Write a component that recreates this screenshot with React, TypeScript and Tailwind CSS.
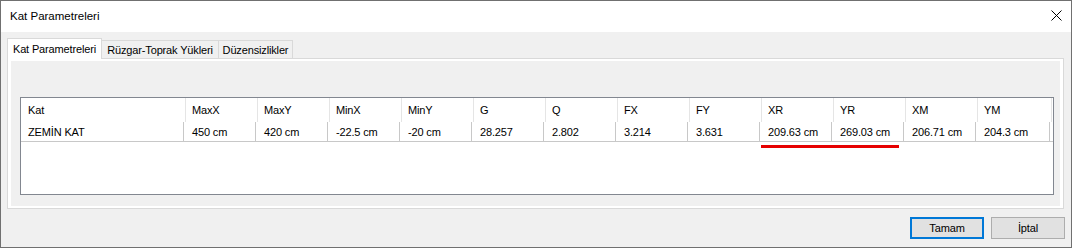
import React from 'react';

const columns = [
  { name: 'Kat', value: 'ZEMİN KAT' },
  { name: 'MaxX', value: '450 cm' },
  { name: 'MaxY', value: '420 cm' },
  { name: 'MinX', value: '-22.5 cm' },
  { name: 'MinY', value: '-20 cm' },
  { name: 'G', value: '28.257' },
  { name: 'Q', value: '2.802' },
  { name: 'FX', value: '3.214' },
  { name: 'FY', value: '3.631' },
  { name: 'XR', value: '209.63 cm' },
  { name: 'YR', value: '269.03 cm' },
  { name: 'XM', value: '206.71 cm' },
  { name: 'YM', value: '204.3 cm' },
];

const headerWidth = (i: number) => (i === 0 ? 'w-[165px] pl-[7px]' : i === 12 ? 'w-[74px] pl-[6px]' : 'w-[72px] pl-[6px]');
const cellWidth = (i: number) => (i === 0 ? 'w-[163px] pl-[7px]' : i === 12 ? 'w-[74px] pl-[8px]' : 'w-[72px] pl-[8px]');

const App = () => {
  return (
    <div className="w-[1072px] h-[248px] border border-[#707070] bg-[#f0f0f0] flex flex-col font-['Liberation_Sans',Arial,sans-serif] text-black">
      {/* title bar */}
      <div className="h-[31px] bg-white flex items-center justify-between pl-[9px] pr-[9px]">
        <span className="text-[11.5px]">Kat Parametreleri</span>
        <svg width="11" height="11" viewBox="0 0 11 11" className="-mt-[2px]">
          <path d="M0.5 0.5 L10.5 10.5 M10.5 0.5 L0.5 10.5" stroke="#000" strokeWidth="1" fill="none" />
        </svg>
      </div>

      <div className="px-[6px] pt-[6px] text-[11px] tracking-[-0.15px]">
        {/* tabs */}
        <div className="flex items-end h-[20px]">
          <div className="relative z-10 -mb-px h-[21px] w-[95px] bg-white border border-b-0 border-[#d9d9d9] flex items-center justify-center">
            Kat Parametreleri
          </div>
          <div className="h-[18px] w-[117px] border border-b-0 border-l-0 border-[#d9d9d9] flex items-center justify-center pt-[1px]">
            Rüzgar-Toprak Yükleri
          </div>
          <div className="h-[18px] w-[74px] border border-b-0 border-l-0 border-[#d9d9d9] flex items-center justify-center pt-[1px]">
            Düzensizlikler
          </div>
        </div>

        {/* tab page */}
        <div className="w-[1057px] h-[151px] border border-[#d9d9d9] bg-white pt-[2px] pb-[2px] px-[3px]">
          <div className="h-full bg-[#f0f0f0] pl-[9px] pt-[36px]">
            <div className="relative w-[1034px] h-[98px] border border-[#828790] bg-white">
              <div className="flex h-[24px]">
                {columns.map((c, i) => (
                  <div key={c.name} className={`${headerWidth(i)} h-full flex items-center border-r border-[#e5e5e5]`}>
                    {c.name}
                  </div>
                ))}
              </div>
              <div className="flex h-[20px] border-b border-[#c8c8c8]">
                {columns.map((c, i) => (
                  <div key={c.name} className={`${cellWidth(i)} h-full flex items-center border-r border-[#c8c8c8] pt-[1px]`}>
                    {c.value}
                  </div>
                ))}
              </div>
              <div className="absolute left-[740px] top-[47px] w-[138px] h-[3px] bg-[#e60000]" />
            </div>
          </div>
        </div>

        {/* buttons */}
        <div className="flex justify-end gap-[7px] mt-[8px] pr-[0px]">
          <button className="w-[74px] h-[22px] border-2 border-[#0078d7] bg-[#e1e1e1] flex items-center justify-center">
            Tamam
          </button>
          <button className="w-[74px] h-[22px] border border-[#adadad] bg-[#e1e1e1] flex items-center justify-center">
            İptal
          </button>
        </div>
      </div>
    </div>
  );
};

export default App;
